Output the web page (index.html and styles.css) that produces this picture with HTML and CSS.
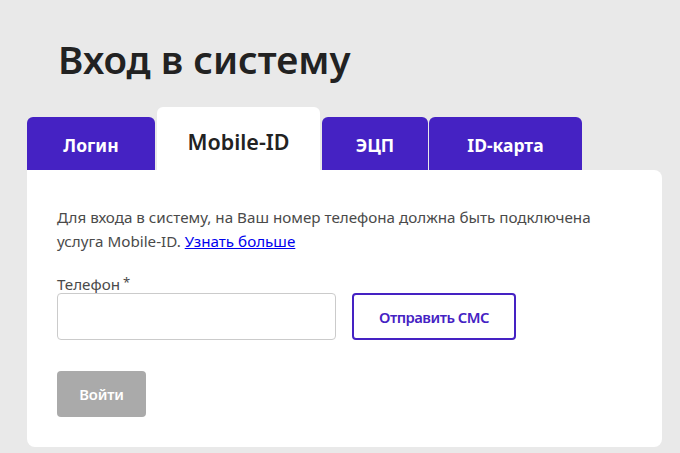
FILE: index.html
```html
<!DOCTYPE html>
<html lang="ru">
<head>
<meta charset="utf-8">
<title>Вход в систему</title>
<link rel="stylesheet" href="styles.css">
</head>
<body>
<div class="page">
  <h1 class="title">Вход в систему</h1>
  <div class="tabs">
    <div class="tab tab-login">Логин</div>
    <div class="tab tab-active">Mobile-ID</div>
    <div class="tab tab-ecp">ЭЦП</div>
    <div class="tab tab-card">ID-карта</div>
  </div>
  <div class="card">
    <p class="info">Для входа в систему, на Ваш номер телефона должна быть подключена услуга Mobile-ID. <a href="#" class="link">Узнать больше</a></p>
    <label class="label" for="phone">Телефон<span class="req">*</span></label>
    <div class="row">
      <input class="input" id="phone" type="text">
      <button class="btn-outline" type="button">Отправить СМС</button>
    </div>
    <button class="btn-submit" type="button">Войти</button>
  </div>
</div>
</body>
</html>
```
FILE: styles.css
```css
html, body {
  margin: 0;
  padding: 0;
}
body {
  background: #e9e9e9;
  font-family: "Noto Sans", "DejaVu Sans", sans-serif;
  color: #4a4a4a;
}
.page {
  padding: 0 18px 6px 27px;
}
.title {
  margin: 0;
  padding: 36px 0 0 31px;
  height: 107px;
  box-sizing: border-box;
  font-size: 38.5px;
  line-height: 46px;
  font-weight: 600;
  color: #222;
}
.tabs {
  display: flex;
  align-items: flex-end;
  gap: 2px;
}
.tab {
  height: 53px;
  box-sizing: border-box;
  padding-top: 16px;
  background: #4522c3;
  color: #fff;
  font-weight: 700;
  font-size: 17.5px;
  line-height: 24px;
  text-align: center;
  border-radius: 6px 6px 0 0;
}
.tab-login { width: 128px; }
.tab-active {
  width: 163px;
  height: 63px;
  padding-top: 23px;
  background: #fff;
  color: #222;
  font-size: 21.5px;
  font-weight: 600;
}
.tab-ecp { width: 106px; }
.tab-card { width: 153px; margin-left: -1px; }
.card {
  background: #fff;
  border-radius: 0 8px 8px 8px;
  padding: 35px 30px 30px;
  height: 277px;
  box-sizing: border-box;
}
.info {
  margin: 0;
  font-size: 15.2px;
  line-height: 24px;
}
.link {
  color: #0000ee;
}
.label {
  display: block;
  margin-top: 22px;
  font-size: 15.2px;
  line-height: 18px;
}
.req {
  margin-left: 3px;
  font-size: 13px;
  vertical-align: top;
  line-height: 14px;
}
.row {
  display: flex;
  gap: 16px;
}
.input {
  width: 279px;
  height: 47px;
  box-sizing: border-box;
  border: 1px solid #cbcbcb;
  border-radius: 4px;
  margin: 0;
  font: inherit;
}
.btn-outline {
  width: 164px;
  height: 47px;
  box-sizing: border-box;
  border: 2px solid #4522c3;
  border-radius: 4px;
  background: #fff;
  color: #4522c3;
  font-family: inherit;
  font-size: 14.8px;
  font-weight: 600;
  letter-spacing: -0.5px;
}
.btn-submit {
  display: block;
  margin-top: 31px;
  width: 89px;
  height: 46px;
  border: 0;
  border-radius: 4px;
  background: #aaaaaa;
  color: #fff;
  font-family: inherit;
  font-size: 14.8px;
  font-weight: 600;
  letter-spacing: -0.2px;
}
```
